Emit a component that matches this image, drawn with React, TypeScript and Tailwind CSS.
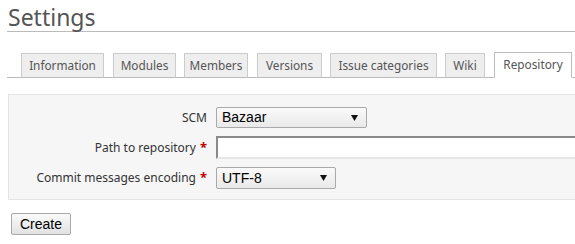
const TABS = [
  { label: "Information", cls: "w-[83px] ml-0" },
  { label: "Modules", cls: "w-[63px] ml-[9px]" },
  { label: "Members", cls: "w-[64px] ml-[8px]" },
  { label: "Versions", cls: "w-[65px] ml-[9px]" },
  { label: "Issue categories", cls: "w-[107px] ml-[8px]" },
  { label: "Wiki", cls: "w-[40px] ml-[8px]" },
];

function Arrow() {
  return (
    <svg width="7" height="6" viewBox="0 0 7 6" className="block">
      <path d="M0 0h7L3.5 6z" fill="#111" />
    </svg>
  );
}

function Label({ text, required }: { text: string; required?: boolean }) {
  return (
    <div className="w-[199px] shrink-0 pr-px text-right text-[12px] text-[#333]">
      {text}
      {required && <span className="ml-[4px] text-[13px] font-bold text-[#bb0000]">*</span>}
    </div>
  );
}

export default function App() {
  return (
    <div className="h-[244px] w-[575px] overflow-hidden bg-white pl-[7px] font-['Noto_Sans',sans-serif]">
      <h2 className="-mb-px box-content h-[26px] border-b border-[#bbb] pl-[1px] pt-[5px] text-[23px] leading-[24px] text-[#555]">
        Settings
      </h2>

      {/* tabs */}
      <div className="mt-[21px] flex h-[26px] items-end border-b border-[#bbb] pl-[14px]">
        {TABS.map((t) => (
          <div
            key={t.label}
            className={`${t.cls} -mb-px flex h-[25px] shrink-0 items-center justify-center border border-[#ccc] border-b-[#bbb] bg-[#eeeeee] text-[11.8px] text-[#555]`}
          >
            {t.label}
          </div>
        ))}
        <div className="-mb-px ml-[9px] flex h-[26px] w-[78px] shrink-0 items-center justify-center border border-[#bbb] border-b-white bg-white text-[11.8px] text-[#555]">
          Repository
        </div>
      </div>

      {/* repository form */}
      <div className="ml-px mt-[16px] w-[600px] border border-[#e4e4e4] bg-[#f6f6f6] pb-[10px] pt-[12px]">
        <div className="flex items-center gap-[8px]">
          <Label text="SCM" />
          <div className="flex h-[21px] w-[151px] shrink-0 items-center justify-between rounded-[2px] border border-[#a9a9a9] bg-gradient-to-b from-[#fafafa] to-[#e9e9e9] pl-[5px] pr-[8px] font-['Liberation_Sans',sans-serif] text-[14px] text-black">
            <span>Bazaar</span>
            <Arrow />
          </div>
        </div>
        <div className="mt-[8px] flex items-center gap-[8px]">
          <Label text="Path to repository" required />
          <div className="h-[23px] w-[400px] shrink-0 border-2 border-b-[#e6e6e6] border-l-[#8a8a8a] border-r-[#e6e6e6] border-t-[#8a8a8a] bg-white" />
        </div>
        <div className="mt-[8px] flex items-center gap-[8px]">
          <Label text="Commit messages encoding" required />
          <div className="flex h-[22px] w-[120px] shrink-0 items-center justify-between rounded-[2px] border border-[#a9a9a9] bg-gradient-to-b from-[#fafafa] to-[#e9e9e9] pl-[5px] pr-[8px] font-['Liberation_Sans',sans-serif] text-[14px] text-black">
            <span>UTF-8</span>
            <Arrow />
          </div>
        </div>
      </div>

      <button className="ml-[4px] mt-[13px] h-[22px] w-[60px] rounded-[2px] border border-[#a9a9a9] bg-gradient-to-b from-[#fafafa] to-[#e2e2e2] font-['Liberation_Sans',sans-serif] text-[14px] text-black">
        Create
      </button>
    </div>
  );
}
